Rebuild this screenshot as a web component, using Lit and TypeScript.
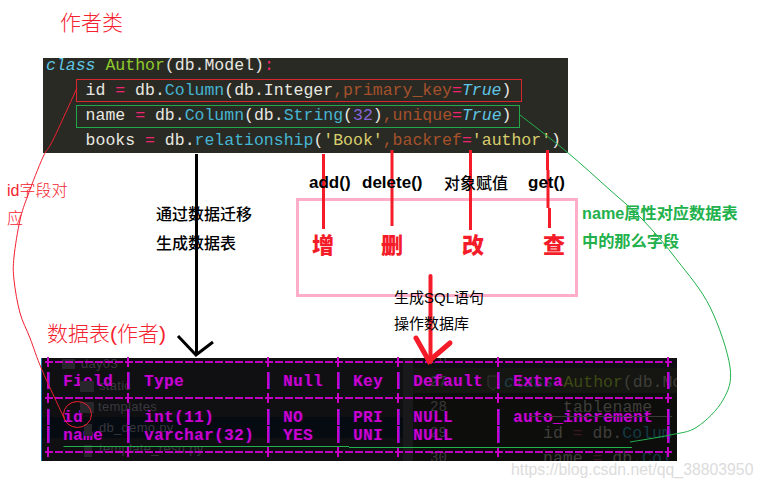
import { LitElement, html, css, svg } from "lit";
import { customElement } from "lit/decorators.js";
import { styleMap } from "lit/directives/style-map.js";

type Tok = [string, string?];
const CODE: Tok[][] = [
  [["class", "kw"], [" "], ["Author", "cls"], ["(db.Model)"], [":", "op"]],
  [["    id "], ["=", "op"], [" db."], ["Column", "fn"], ["(db.Integer"], [",primary_key", "arg"], ["=", "op"], ["True", "kw"], [")"]],
  [["    name "], ["=", "op"], [" db."], ["Column", "fn"], ["(db."], ["String", "fn"], ["("], ["32", "num"], [")"], [",unique", "arg"], ["=", "op"], ["True", "kw"], [")"]],
  [["    books "], ["=", "op"], [" db."], ["relationship", "fn"], ["("], ["'Book'", "str"], [",backref", "arg"], ["=", "op"], ["'author'", "str"], [")"]],
];

const LABELS: [string, string, number, number][] = [
  ["作者类", "title", 60, 9],
  ["数据表(作者)", "title", 47, 320],
  ["id字段对", "note", 7, 181],
  ["应", "note", 7, 209],
  ["通过数据迁移", "mid", 156, 205],
  ["生成数据表", "mid", 156, 234],
  ["add()", "op-label", 309, 172],
  ["delete()", "op-label", 362, 172],
  ["对象赋值", "op-label cn", 444, 174],
  ["get()", "op-label", 528, 172],
  ["增", "crud", 312, 232],
  ["删", "crud", 381, 232],
  ["改", "crud", 462, 232],
  ["查", "crud", 543, 232],
  ["name属性对应数据表", "green", 582, 203],
  ["中的那么字段", "green", 582, 231],
  ["生成SQL语句", "sql", 394, 288],
  ["操作数据库", "sql", 394, 314],
];

const TREE: [string, number, number][] = [
  ["day03", 39, -1],
  ["static", 57, 21],
  ["templates", 56, 42],
  ["db_demo.py", 57, 63],
  ["template_resu.py", 57, 84],
];
const NUMS: [string, number][] = [["26", -6], ["27", 17], ["28", 42], ["29", 68], ["30", 93]];
const GHOST_CODE: [Tok[], number, number][] = [
  [[["class", "gc-kw"], [" "], ["Author", "gc-cls"], ["(db.Mo"]], 462, 17],
  [[["tablename"]], 521, 42],
  [[["id "], ["=", "gc-op"], [" db."], ["Colum", "gc-fn"]], 501, 68],
  [[["name "], ["=", "gc-op"], [" db."], ["Col", "gc-fn"]], 501, 93],
];

const ROWS: string[][] = [
  ["Field", "Type", "Null", "Key", "Default", "Extra"],
  ["id", "int(11)", "NO", "PRI", "NULL", "auto_increment"],
  ["name", "varchar(32)", "YES", "UNI", "NULL", ""],
];

const SEP_X = [48, 128, 268, 338, 398, 498, 668];
const RULE_Y = [362, 398, 452];

const RED_CURVE: [number, number][] = [
  [77, 88], [53, 140], [43, 157], [28, 195], [20, 220], [14, 257], [14, 280], [20, 313], [30, 338], [42, 370], [65, 420],
];
const GREEN_CURVE: [number, number][] = [
  [520, 115], [567, 152], [610, 190], [643, 220], [677, 260], [710, 307], [730, 367], [723, 400], [697, 427], [670, 435], [630, 442],
];

/** Smooth path through points (Catmull-Rom converted to cubic segments). */
function smooth(p: [number, number][]): string {
  let d = `M${p[0][0]} ${p[0][1]}`;
  for (let i = 0; i < p.length - 1; i++) {
    const a = p[Math.max(i - 1, 0)];
    const b = p[i];
    const c = p[i + 1];
    const e = p[Math.min(i + 2, p.length - 1)];
    const c1 = [b[0] + (c[0] - a[0]) / 6, b[1] + (c[1] - a[1]) / 6];
    const c2 = [c[0] - (e[0] - b[0]) / 6, c[1] - (e[1] - b[1]) / 6];
    d += `C${c1[0]} ${c1[1]} ${c2[0]} ${c2[1]} ${c[0]} ${c[1]}`;
  }
  return d;
}

@customElement("app-root")
export class AppRoot extends LitElement {
  static styles = css`
    :host {
      display: block;
      position: relative;
      width: 764px;
      height: 488px;
      overflow: hidden;
      background: #fff;
      font-family: "Liberation Sans", "Noto Sans CJK SC", sans-serif;
    }
    .label { position: absolute; white-space: nowrap; line-height: 1.3; }
    .title { font-size: 21px; color: #f5222f; font-weight: 300; }
    .note { font-size: 16px; color: #f5222f; font-weight: 300; }
    .mid { font-size: 16px; font-weight: 500; color: #000; }
    .op-label { font-size: 17px; font-weight: 700; color: #000; }
    .cn { font-size: 16px; font-weight: 500; }
    .crud { font-size: 22px; font-weight: 900; color: #f51c2a; }
    .green { font-size: 16.2px; font-weight: 700; color: #22b14c; }
    .sql { font-size: 15px; color: #000; font-weight: 400; }

    .code {
      position: absolute;
      left: 43px;
      top: 58px;
      width: 525px;
      height: 95px;
      box-sizing: border-box;
      padding: 0 0 0 3px;
      background: #2a2a25;
      display: flex;
      flex-direction: column;
      font-family: "Liberation Mono", monospace;
      font-size: 16.5px;
      color: #e8e8e0;
    }
    .code div { flex: none; height: 25px; line-height: 16px; white-space: pre; }
    .code div:last-child { height: 20px; }
    .kw { font-style: italic; color: #5ec6e4; }
    .cls { color: #8fcb2c; }
    .op { color: #f0246e; }
    .fn { color: #45b5d2; }
    .arg { color: #a5512a; }
    .num { color: #8467d8; }
    .str { color: #d9cf6c; }

    .term {
      position: absolute;
      left: 41px;
      top: 358px;
      width: 636px;
      height: 103px;
      overflow: hidden;
      background: #101012;
      border-left: 1px solid #1f6fa8;
      box-sizing: border-box;
    }
    .band-a { position: absolute; left: 0; top: 59px; width: 361px; height: 21px; background: #060b12; }
    .band-b { position: absolute; left: 371px; top: 10px; width: 265px; height: 25px; background: #151511; }
    .band-c { position: absolute; left: 371px; top: 35px; width: 265px; height: 68px; background: #0d0d0c; }
    .band-d { position: absolute; left: 361px; top: 0; width: 10px; height: 103px; background: #19191b; }
    .ghost { position: absolute; white-space: pre; line-height: 1; }
    .g-tree { font-size: 13px; color: #38383e; letter-spacing: 0.3px; }
    .g-num { font-family: "Liberation Mono", monospace; font-size: 14px; color: #3a3a3a; left: 388px; }
    .g-code { font-family: "Liberation Mono", monospace; font-size: 16.5px; color: #3f3f3a; }
    .gc-kw { color: #1f3f4a; font-style: italic; }
    .gc-cls { color: #3e4a16; }
    .gc-op { color: #3a1820; }
    .gc-fn { color: #143a44; }

    .table {
      position: absolute;
      left: 21px;
      top: 15px;
      display: grid;
      grid-template-columns: 81px 139px 70px 60px 100px 120px;
      grid-auto-rows: 18px;
      font-family: "Liberation Mono", monospace;
      font-size: 16px;
      font-weight: 700;
      line-height: 18px;
      letter-spacing: 0.4px;
      color: #cc00cc;
      text-shadow: 1px 0 0 rgba(70, 0, 190, 0.45);
      white-space: pre;
    }
    .gap { grid-column: 1 / -1; height: 18px; }

    .wm {
      position: absolute;
      left: 511px;
      top: 460px;
      font-size: 15.8px;
      line-height: 20px;
      color: #dcdcdc;
      white-space: nowrap;
    }
    .overlay { position: absolute; left: 0; top: 0; pointer-events: none; }
  `;

  private place(x: number, y: number) {
    return styleMap({ left: `${x}px`, top: `${y}px` });
  }

  private tableLines() {
    const out = [];
    for (const y of RULE_Y) {
      out.push(svg`<line x1="45" y1=${y} x2="672" y2=${y} stroke="#c000c0" stroke-width="2" stroke-dasharray="8 2"/>`);
      for (const x of SEP_X) {
        out.push(svg`<line x1=${x} y1=${y - 5} x2=${x} y2=${y + 5} stroke="#c800c8" stroke-width="2"/>`);
      }
    }
    for (const x of SEP_X) {
      for (const [a, b] of [[372, 389], [409, 425], [426, 443]]) {
        out.push(svg`<line x1=${x} y1=${a} x2=${x} y2=${b} stroke="#c800c8" stroke-width="2"/>`);
        out.push(svg`<line x1=${x + 1.5} y1=${a} x2=${x + 1.5} y2=${b} stroke="#4a20b8" stroke-width="1"/>`);
      }
    }
    return out;
  }

  render() {
    return html`
      <div class="code">
        ${CODE.map((l) => html`<div>${l.map(([t, c]) => html`<span class=${c ?? ""}>${t}</span>`)}</div>`)}
      </div>

      <div class="term">
        <div class="band-a"></div>
        <div class="band-b"></div>
        <div class="band-c"></div>
        <div class="band-d"></div>
        ${TREE.map(([t, x, y]) => html`<div class="ghost g-tree" style=${this.place(x, y)}>${t}</div>`)}
        ${NUMS.map(([t, y]) => html`<div class="ghost g-num" style=${styleMap({ top: `${y}px` })}>${t}</div>`)}
        ${GHOST_CODE.map(
          ([toks, x, y]) => html`<div class="ghost g-code" style=${this.place(x, y)}>${toks.map(
            ([t, c]) => html`<span class=${c ?? ""}>${t}</span>`
          )}</div>`
        )}
        <div class="table">
          ${ROWS[0].map((c) => html`<div>${c}</div>`)}
          <div class="gap"></div>
          ${ROWS[1].map((c) => html`<div>${c}</div>`)}
          ${ROWS[2].map((c) => html`<div>${c}</div>`)}
        </div>
      </div>

      <div class="wm">https://blog.csdn.net/qq_38803950</div>

      <svg class="overlay" width="764" height="488" viewBox="0 0 764 488" fill="none">
        <g fill="#26262b">
          <rect x="62" y="359" width="13" height="10"/>
          <rect x="80" y="381" width="14" height="11"/>
          <rect x="80" y="402" width="14" height="11"/>
          <rect x="84" y="424" width="8" height="12"/>
          <rect x="84" y="445" width="8" height="12"/>
        </g>
        <path d="M488 376H498V386L493 390L488 386Z" fill="#1a1a18" stroke="#333330"/>
        <path d="M530 416.5H672" stroke="#3a3a38"/>
        ${this.tableLines()}

        <rect x="76.5" y="79.5" width="445" height="22" stroke="#d9262e" stroke-width="1"/>
        <rect x="76.5" y="105.5" width="443" height="22" stroke="#22a84a" stroke-width="1"/>

        <rect x="297.5" y="199.5" width="279" height="96" stroke="#ffaec9" stroke-width="3"/>

        <path d="M196.5 154V354" stroke="#000" stroke-width="3"/>
        <path d="M178 336L196 355L213 342" stroke="#000" stroke-width="3"/>

        <g stroke="#f51c2a" stroke-width="3">
          <path d="M323.5 154V229"/>
          <path d="M392 150V226"/>
          <path d="M470.5 150V230"/>
          <path d="M547.5 150V170M548 170V208M549.5 208V228"/>
        </g>

        <path d="M430.5 276V362" stroke="#f51c2a" stroke-width="4" stroke-linecap="round"/>
        <path d="M416 338L429 361L450 343" stroke="#f51c2a" stroke-width="5" stroke-linecap="round"/>

        <ellipse cx="77.5" cy="414.5" rx="14" ry="13" stroke="#f02030" stroke-width="1"/>
        <path d=${smooth(RED_CURVE)} stroke="#f02030" stroke-width="1"/>
        <path d=${smooth(GREEN_CURVE)} stroke="#22b14c" stroke-width="1"/>
        <path d="M63.5 446.5H349M349 447.5H632" stroke="#22b14c" stroke-width="1"/>
      </svg>

      ${LABELS.map(([t, c, x, y]) => html`<div class="label ${c}" style=${this.place(x, y)}>${t}</div>`)}
    `;
  }
}
